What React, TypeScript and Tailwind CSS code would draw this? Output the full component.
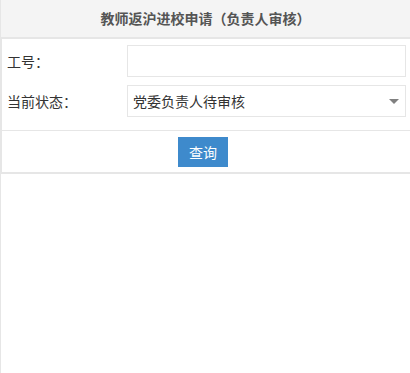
export default function App() {
  return (
    <div className="w-[410px] h-[373px] bg-white border-l border-[#e6e6e6] text-[#333] font-['Microsoft_YaHei','Noto_Sans_CJK_SC',sans-serif]">
      <div className="h-[39px] bg-[#f4f4f4] border-b-2 border-[#e6e6e6] flex items-center justify-center text-[14px] font-bold text-[#555]">
        教师返沪进校申请（负责人审核）
      </div>
      <div className="border-l border-b-2 border-[#e6e6e6]">
        <div className="pt-[6px] pb-[13px] pl-[5px] pr-[4px] flex flex-col gap-2">
          <div className="flex items-center h-[32px]">
            <label className="w-[120px] text-[14px]">工号：</label>
            <input className="flex-1 h-[32px] border border-[#e6e6e6] px-[6px] text-[14px] outline-none" />
          </div>
          <div className="flex items-center h-[32px]">
            <label className="w-[120px] text-[14px]">当前状态：</label>
            <div className="relative flex-1 h-[32px]">
              <select className="w-full h-[32px] border border-[#e6e6e6] pl-[5px] text-[14px] text-[#333] bg-white appearance-none outline-none">
                <option>党委负责人待审核</option>
              </select>
              <svg className="absolute right-[7px] top-[14px] pointer-events-none" width="10" height="5" viewBox="0 0 10 5">
                <path d="M0 0 L10 0 L5 5 Z" fill="#808080" />
              </svg>
            </div>
          </div>
        </div>
        <div className="border-t border-[#e6e6e6] pt-[6px] pb-[5px] flex justify-center pr-[6px]">
          <button className="w-[50px] h-[30px] bg-[#3e8acc] text-white text-[14px]">查询</button>
        </div>
      </div>
    </div>
  );
}
